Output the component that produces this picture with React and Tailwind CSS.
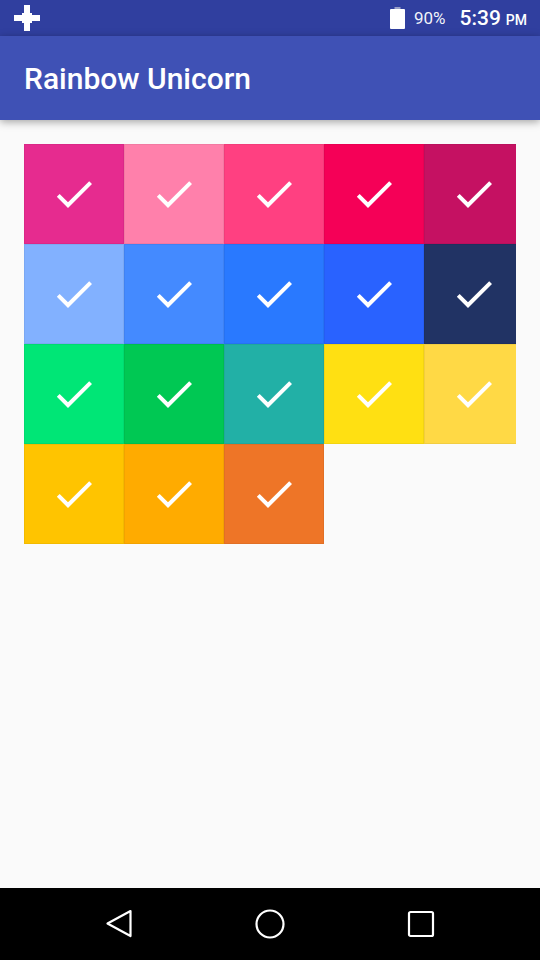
import React from "react";

const colors = [
  "#E62B8F", "#FF80AB", "#FF4081", "#F50057", "#C51162",
  "#82B1FF", "#448AFF", "#2979FF", "#2962FF", "#213364",
  "#00E676", "#00C853", "#22B0A6", "#FFE012", "#FFD945",
  "#FFC400", "#FFAB00", "#EE7527",
];

function Check() {
  return (
    <svg width="48" height="48" viewBox="0 0 24 24" fill="#fff">
      <path d="M9 16.17L4.83 12l-1.42 1.41L9 19 21 7l-1.41-1.41z" />
    </svg>
  );
}

export default function App() {
  return (
    <div className="w-[540px] h-[960px] flex flex-col bg-[#FAFAFA] overflow-hidden" style={{ fontFamily: "Roboto, 'Noto Sans', sans-serif" }}>
      {/* status bar */}
      <div className="h-[36px] bg-[#303F9F] flex items-center pl-[14px] pr-[13px] text-white shrink-0">
        <svg width="26" height="26" viewBox="0 0 26 26" fill="#fff">
          <path d="M10 0h6v8h2v2h8v6h-8v2h-2v8h-6v-8H8v-2H0v-6h8V8h2z" />
        </svg>
        <div className="flex-1" />
        <svg width="15" height="22" viewBox="0 0 15 22" className="mr-[9px]">
          <rect x="4.5" y="0" width="6" height="2" fill="#9aa0c8" />
          <rect x="0" y="2" width="15" height="20" rx="1" fill="#fff" />
        </svg>
        <span className="text-[17px] leading-none mr-[14px] text-white/95">90%</span>
        <span className="text-[21px] font-medium leading-none">5:39</span>
        <span className="text-[14px] font-medium leading-none ml-[5px] mt-[3px]">PM</span>
      </div>
      {/* app bar */}
      <div className="h-[84px] bg-[#3F51B5] flex items-center px-6 shrink-0 shadow-[0_2px_8px_rgba(0,0,0,0.35)] relative z-10">
        <span className="text-white text-[30px] font-medium">Rainbow Unicorn</span>
      </div>
      {/* content */}
      <div className="flex-1 pt-6 px-6">
        <div className="w-[492px] overflow-hidden">
          <div className="grid grid-cols-[100px_100px_100px_100px_100px] auto-rows-[100px] w-[500px]">
            {colors.map((c, i) => (
              <div key={i} className="flex items-center justify-center border border-black/5" style={{ backgroundColor: c }}>
                <Check />
              </div>
            ))}
          </div>
        </div>
      </div>
      {/* nav bar */}
      <div className="h-[72px] bg-black shrink-0 flex items-center justify-between px-[105px]">
        <svg width="28" height="30" viewBox="0 0 28 30" fill="none" stroke="#fff" strokeWidth="2.2" strokeLinejoin="round">
          <path d="M25.5 2 L2.5 14.5 L25.5 27 Z" />
        </svg>
        <svg width="32" height="32" viewBox="0 0 32 32" fill="none" stroke="#fff" strokeWidth="2.2">
          <circle cx="16" cy="16" r="13.5" />
        </svg>
        <svg width="28" height="28" viewBox="0 0 28 28" fill="none" stroke="#fff" strokeWidth="2.2">
          <rect x="2" y="2" width="24" height="24" rx="1.5" />
        </svg>
      </div>
    </div>
  );
}
